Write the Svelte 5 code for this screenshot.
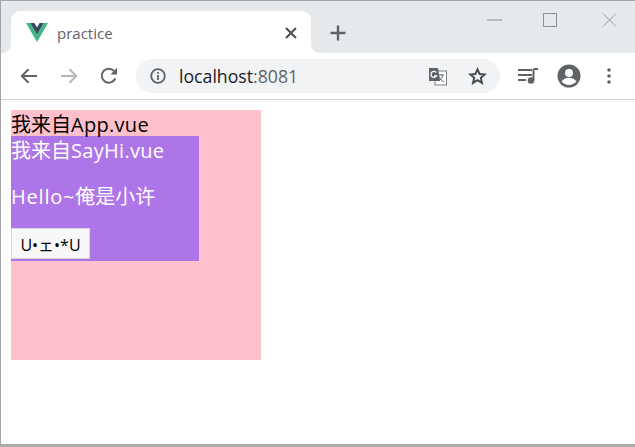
<script>
  const title = 'practice';
</script>

<div class="window">
  <header class="strip">
    <div class="tab">
      <svg class="favicon" width="22" height="19" viewBox="0 0 22 19">
        <path d="M0 0h4.400L11 11.400 17.600 0H22L11 19z" fill="#41b883"/>
        <path d="M4.400 0h4L11 4.600 13.600 0h4L11 11.400z" fill="#35495e"/>
      </svg>
      <span class="tab-title">{title}</span>
      <svg class="tab-close" width="12" height="12" viewBox="0 0 12 12">
        <path d="M1 1l10 10M11 1L1 11" stroke="#4a4d51" stroke-width="2" fill="none"/>
      </svg>
    </div>
    <svg class="plus" width="16" height="16" viewBox="0 0 16 16">
      <path d="M8 0.500v15M0.500 8h15" stroke="#5f6368" stroke-width="2.400" fill="none"/>
    </svg>
    <div class="controls">
      <svg class="min" width="15" height="2" viewBox="0 0 15 2"><path d="M0 1h15" stroke="#8b8e92" stroke-width="1"/></svg>
      <svg class="max" width="14" height="14" viewBox="0 0 14 14"><rect x="0.500" y="0.500" width="13" height="13" fill="none" stroke="#8b8e92"/></svg>
      <svg class="x" width="15" height="14" viewBox="0 0 15 14"><path d="M1 0.500l13 13M14 0.500l-13 13" stroke="#9a9da0" stroke-width="1" fill="none"/></svg>
    </div>
  </header>

  <nav class="toolbar">
    <svg class="back" width="18" height="16" viewBox="0 0 18 16">
      <path d="M17 8H2M8.500 1.200L1.800 8l6.700 6.800" stroke="#5f6368" stroke-width="2" fill="none"/>
    </svg>
    <svg class="fwd" width="18" height="16" viewBox="0 0 18 16">
      <path d="M1 8h15M9.500 1.200L16.200 8l-6.700 6.800" stroke="#b4b6b9" stroke-width="2" fill="none"/>
    </svg>
    <svg class="reload" width="18" height="18" viewBox="0 0 18 18">
      <path d="M15.200 11.500A7 7 0 1 1 14 4" stroke="#5f6368" stroke-width="2" fill="none"/>
      <path d="M17 0.800V7.400H10.400z" fill="#5f6368"/>
    </svg>
    <div class="omnibox">
      <svg class="info" width="16" height="16" viewBox="0 0 16 16">
        <circle cx="8" cy="8" r="6.800" fill="none" stroke="#5f6368" stroke-width="1.800"/>
        <path d="M8 7v5M8 4v1.800" stroke="#5f6368" stroke-width="1.800"/>
      </svg>
      <span class="url">localhost<span class="port">:8081</span></span>
      <svg class="translate" width="19" height="19" viewBox="0 0 19 19">
        <rect x="7" y="4" width="11.500" height="14" fill="#fff" stroke="#7d8084"/>
        <path d="M10 8h6M13 7v1M15 8c-.5 3-3 5-4.500 6M11 10c1 2 3 4 5 5" stroke="#5f6368" fill="none"/>
        <path d="M1 1h9l2 13H1z" fill="#5f6368"/>
        <path d="M8.300 5.500A3 3 0 1 0 8.500 9H6" stroke="#fff" stroke-width="1.300" fill="none"/>
      </svg>
      <svg class="star" width="19" height="18" viewBox="0 0 19 18">
        <path d="M9.500 2.300l2.100 4.700 5.100.5-3.900 3.400 1.200 5-4.500-2.700-4.500 2.700 1.200-5-3.900-3.400 5.100-.5z" fill="none" stroke="#45484c" stroke-width="1.900"/>
      </svg>
    </div>
    <svg class="queue" width="20" height="16" viewBox="0 0 20 16">
      <path d="M0 2h14M0 7h14M0 12h8" stroke="#5f6368" stroke-width="2" fill="none"/>
      <path d="M15.500 1v11" stroke="#5f6368" stroke-width="2"/>
      <path d="M15.500 1H20" stroke="#5f6368" stroke-width="2"/>
      <circle cx="13" cy="12.500" r="3.300" fill="#5f6368"/>
    </svg>
    <svg class="account" width="24" height="24" viewBox="0 0 24 24">
      <circle cx="12" cy="12" r="11.500" fill="#5f6368"/>
      <circle cx="12" cy="9" r="4" fill="#fff"/>
      <path d="M4.500 17.500c2-3 5-3.800 7.500-3.800s5.500.8 7.500 3.800c-2 2.300-4.700 3.500-7.500 3.500s-5.500-1.200-7.500-3.500z" fill="#fff"/>
    </svg>
    <svg class="dots" width="4" height="16" viewBox="0 0 4 16">
      <circle cx="2" cy="2" r="1.800" fill="#5f6368"/>
      <circle cx="2" cy="8" r="1.800" fill="#5f6368"/>
      <circle cx="2" cy="14" r="1.800" fill="#5f6368"/>
    </svg>
  </nav>

  <main class="page">
    <div class="app">
      <div class="line">我来自<span class="latin">App.vue</span></div>
      <div class="sayhi">
        <div class="line">我来自<span class="latin">SayHi.vue</span></div>
        <p class="line"><span class="hello">Hello~</span>俺是小许</p>
        <button>U•ェ•*U</button>
      </div>
    </div>
  </main>
</div>

<style>
  :global(body) {
    margin: 0;
    background: #fff;
  }
  .window {
    box-sizing: border-box;
    width: 635px;
    height: 447px;
    display: flex;
    flex-direction: column;
    border-top: 1px solid #a3a5a7;
    border-left: 1px solid #a3a5a7;
    border-bottom: 3px solid #a9abad;
    overflow: hidden;
    font-family: "Open Sans", "Noto Sans CJK SC", sans-serif;
  }
  .strip {
    height: 52px;
    flex: none;
    box-sizing: border-box;
    background: #e6e9ec;
    padding: 10px 0 0 10px;
    display: flex;
  }
  .tab {
    position: relative;
    width: 300px;
    height: 42px;
    background: #fff;
    border-radius: 9px 9px 0 0;
    display: flex;
    align-items: center;
    box-sizing: border-box;
    padding: 1px 14px 0 15px;
  }
  .tab::before,
  .tab::after {
    content: "";
    position: absolute;
    bottom: 0;
    width: 8px;
    height: 8px;
  }
  .tab::before {
    left: -8px;
    background: radial-gradient(circle at 0 0, transparent 7.500px, #fff 8px);
  }
  .tab::after {
    right: -8px;
    background: radial-gradient(circle at 100% 0, transparent 7.500px, #fff 8px);
  }
  .favicon {
    flex: none;
  }
  .tab-title {
    margin-left: 9px;
    font-size: 15px;
    color: #5f6368;
    font-family: "Open Sans", sans-serif;
  }
  .tab-close {
    margin-left: auto;
  }
  .plus {
    margin: 14px 0 0 19px;
  }
  .controls {
    display: flex;
    align-items: flex-start;
    margin-left: 141px;
  }
  .min {
    margin-top: 8px;
  }
  .max {
    margin: 2px 0 0 41px;
  }
  .x {
    margin: 2px 0 0 45px;
  }
  .toolbar {
    height: 47px;
    flex: none;
    box-sizing: border-box;
    border-bottom: 1px solid #d4d5d7;
    display: flex;
    align-items: center;
    padding-left: 19px;
    background: #fff;
  }
  .fwd {
    margin-left: 22px;
  }
  .reload {
    margin-left: 22px;
  }
  .omnibox {
    width: 364px;
    height: 34px;
    margin-left: 18px;
    border-radius: 17px;
    background: #f1f3f4;
    display: flex;
    align-items: center;
    box-sizing: border-box;
    padding-left: 14px;
  }
  .url {
    margin-left: 13px;
    font-size: 17.700px;
    color: #202124;
    font-family: "Open Sans", sans-serif;
  }
  .port {
    color: #5f6368;
  }
  .translate {
    margin-left: auto;
  }
  .star {
    margin: 0 13px 0 21px;
  }
  .queue {
    margin-left: 18px;
  }
  .account {
    margin-left: 19px;
  }
  .dots {
    margin-left: 26px;
  }
  .page {
    flex: 1;
    padding: 10px;
    background: #fff;
  }
  .app {
    width: 250px;
    height: 250px;
    background: #ffc0cb;
    color: #000;
    font-size: 20px;
  }
  .line {
    height: 26px;
    line-height: 30px;
    margin: 0;
  }
  .latin {
    letter-spacing: 0.300px;
  }
  .hello {
    letter-spacing: 0.800px;
  }
  .sayhi {
    width: 188px;
    height: 125px;
    background: #ae75e8;
    color: #fff;
  }
  p.line {
    margin: 20px 0;
  }
  button {
    display: block;
    width: 79px;
    height: 31px;
    padding: 0;
    margin: 1px 0 0;
    background: #f8f8f8;
    border: 1px solid #d8d8d8;
    font-size: 16px;
    color: #000;
    font-family: "Open Sans", "Noto Sans CJK JP", sans-serif;
  }
</style>
